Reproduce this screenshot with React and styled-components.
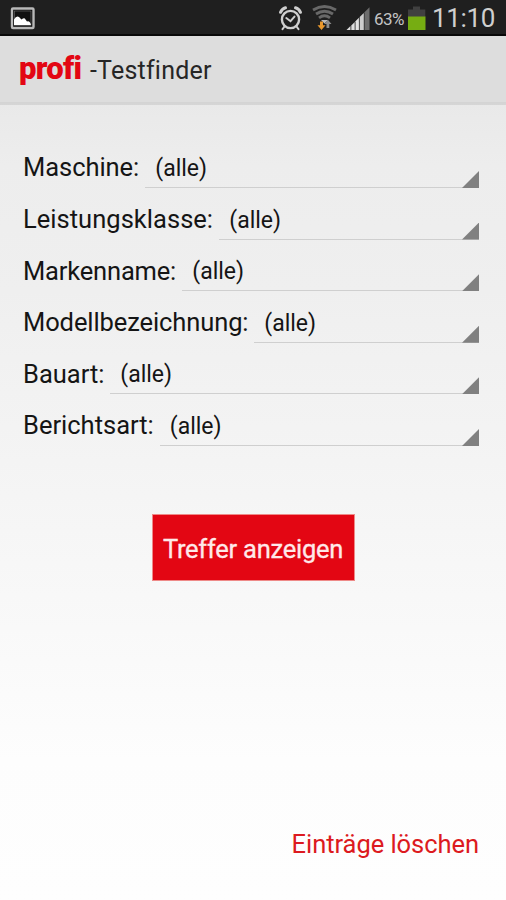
import React from "react";
import styled, { createGlobalStyle } from "styled-components";

const GlobalStyle = createGlobalStyle`
  * { box-sizing: border-box; }
  body { margin: 0; background: #fff; }
`;

const Screen = styled.div`
  width: 506px;
  height: 900px;
  display: flex;
  flex-direction: column;
  overflow: hidden;
  font-family: Roboto, sans-serif;
  color: #151515;
  background: linear-gradient(#e8e8e8 0, #e9e9e9 104px, #ededed 165px, #efefef 290px, #f6f6f6 530px, #fdfdfd 760px, #fefefe 900px);
`;

const StatusBar = styled.header`
  flex: none;
  height: 36px;
  display: flex;
  align-items: flex-start;
  justify-content: space-between;
  background: #1f1f1f;
  border-bottom: 2px solid #080808;
`;

const StatusIcon = styled.svg`
  display: block;
  flex: none;
`;

const StatusGroup = styled.div`
  display: flex;
  height: 36px;
`;

const Percent = styled.span`
  width: 33px;
  margin-left: 3px;
  font-size: 17px;
  line-height: 38px;
  letter-spacing: -0.6px;
  white-space: nowrap;
  color: #c4c4c4;
`;

const Clock = styled.span`
  width: 74px;
  margin-left: 6px;
  font-size: 26px;
  line-height: 36px;
  letter-spacing: -0.35px;
  white-space: nowrap;
  color: #cfcfcf;
`;

const TitleBar = styled.div`
  flex: none;
  height: 69px;
  padding-left: 19px;
  display: flex;
  align-items: flex-start;
  background: #dddddd;
  border-bottom: 3px solid #bfbfbf;
  border-image: linear-gradient(#c9c9c9, #bababa, #d6d6d6) 3;
`;

const Logo = styled.span`
  width: 71px;
  font-size: 31px;
  line-height: 66px;
  font-weight: 900;
  letter-spacing: -0.7px;
  color: #e30613;
`;

const Title = styled.h1`
  margin: 0;
  font-size: 25px;
  line-height: 70px;
  font-weight: 400;
  white-space: nowrap;
  letter-spacing: 0.2px;
  color: #262626;
`;

const Form = styled.form`
  flex: 1;
  display: flex;
  flex-direction: column;
  padding: 31.4px 27px 0 23px;
`;

const Field = styled.label`
  display: flex;
  height: 51.6px;
`;

const FieldName = styled.span`
  flex: none;
  width: ${(p) => p.$width}px;
  font-size: 25.5px;
  line-height: 62.4px;
  white-space: nowrap;
  letter-spacing: ${(p) => p.$spacing}px;
`;

const Spinner = styled.span`
  flex: 1;
  display: flex;
  align-items: flex-end;
  justify-content: space-between;
  border-bottom: 1.5px solid #cfcfcf;
`;

const Value = styled.span`
  padding-left: 10.3px;
  font-size: 23px;
  line-height: 36px;
`;

const Corner = styled.span`
  width: 17px;
  height: 17px;
  margin-bottom: -1px;
  background: #808080;
  clip-path: polygon(100% 0, 100% 100%, 0 100%);
`;

const SubmitButton = styled.button`
  align-self: center;
  width: 203px;
  height: 67px;
  margin: 68.5px 0 0 4px;
  padding: 2px 0 0;
  font: 400 25.5px Roboto, sans-serif;
  letter-spacing: -0.25px;
  -webkit-text-stroke: 0.3px #ffe9e9;
  white-space: nowrap;
  color: #ffe9e9;
  background: #e30613;
  border: 1px solid #ee8a88;
`;

const ClearButton = styled.button`
  align-self: flex-end;
  margin: auto 0 37px;
  padding: 0;
  font: 400 25.5px/38px Roboto, sans-serif;
  letter-spacing: -0.05px;
  white-space: nowrap;
  color: #dc1a20;
  background: none;
  border: 0;
`;

const fields = [
  { name: "Maschine:", width: 122, spacing: -0.05 },
  { name: "Leistungsklasse:", width: 196, spacing: 0.03 },
  { name: "Markenname:", width: 159, spacing: -0.18 },
  { name: "Modellbezeichnung:", width: 231, spacing: -0.1 },
  { name: "Bauart:", width: 87, spacing: 0 },
  { name: "Berichtsart:", width: 136.5, spacing: 0 },
];

function PictureIcon() {
  return (
    <StatusIcon width="44" height="34" viewBox="0 0 44 34">
      <rect x="12" y="8.5" width="21.5" height="19.5" rx="1" fill="#080808" stroke="#b9b9b9" strokeWidth="2.4" />
      <rect x="14.5" y="11" width="16.5" height="14.5" fill="#111" stroke="#777" strokeWidth=".6" />
      <path d="M14 25v-5.5q2.5-4.5 5-2.5l2.5 2.5q3-2.5 4 0l1.5 2q3-1 4 3.5z" fill="#fff" />
    </StatusIcon>
  );
}

function AlarmIcon() {
  return (
    <StatusIcon width="34" height="34" viewBox="278 0 34 34">
      <g fill="none" stroke="#cfcfcf" strokeLinecap="round">
        <circle cx="290.5" cy="19.5" r="8.6" strokeWidth="2.4" />
        <path d="M280.5 12.3q1.5-3.5 5-4.5M300.5 12.3q-1.5-3.5-5-4.5" strokeWidth="3" />
        <path d="M284.5 26.5l-2 2.6M296.5 26.5l2 2.6M286.3 18l4.2 3.2 4-4.6" strokeWidth="2" />
      </g>
    </StatusIcon>
  );
}

function WifiIcon() {
  return (
    <StatusIcon width="33" height="34" viewBox="312 0 33 34">
      <g fill="none" stroke="#686868" strokeWidth="2.8">
        <path d="M313 10q11.5-7 23 0" />
        <path d="M316 14q8.5-5.5 17 0" />
        <path d="M319 17.8q5.5-4 11 0" />
      </g>
      <path d="M321 20h7l-3.5 3.5z" fill="#bbb" />
      <path d="M320 21.5h3v3.8h2.5l-4 4.7-4-4.7h2.5z" fill="#e9982d" />
      <path d="M326.5 28v-4h-2.2l3.6-4.3 3.6 4.3h-2.2v4z" fill="#8c8c8c" />
    </StatusIcon>
  );
}

function SignalIcon() {
  return (
    <StatusIcon width="26" height="34" viewBox="345 0 26 34">
      <path d="M346.5 30l4-4v4z" fill="#ddd" />
      <path d="M351.3 25.4l3.4-3.4V30h-3.4z" fill="#ddd" />
      <path d="M355.5 21.2l3.4-3.4V30h-3.4z" fill="#e2e2e2" />
      <path d="M359.7 17l4.1-4V30h-4.1z" fill="#ccc" />
      <path d="M364.5 12.2l5-5V30h-5z" fill="#6c6c6c" />
    </StatusIcon>
  );
}

function BatteryIcon() {
  return (
    <StatusIcon width="19" height="34" viewBox="406 0 19 34">
      <path d="M412 6.5h7v3h5.3V17H407V9.5h5z" fill="#404040" />
      <path d="M407 16.5h17.5v13.5H407z" fill="#76ad12" />
    </StatusIcon>
  );
}

export default function App() {
  return (
    <Screen>
      <GlobalStyle />
      <StatusBar>
        <PictureIcon />
        <StatusGroup>
          <AlarmIcon />
          <WifiIcon />
          <SignalIcon />
          <Percent>63%</Percent>
          <BatteryIcon />
          <Clock>11:10</Clock>
        </StatusGroup>
      </StatusBar>
      <TitleBar>
        <Logo>profi</Logo>
        <Title>-Testfinder</Title>
      </TitleBar>
      <Form>
        {fields.map(({ name, width, spacing }) => (
          <Field key={name}>
            <FieldName $width={width} $spacing={spacing}>{name}</FieldName>
            <Spinner>
              <Value>(alle)</Value>
              <Corner />
            </Spinner>
          </Field>
        ))}
        <SubmitButton type="button">Treffer anzeigen</SubmitButton>
        <ClearButton type="button">Einträge löschen</ClearButton>
      </Form>
    </Screen>
  );
}
